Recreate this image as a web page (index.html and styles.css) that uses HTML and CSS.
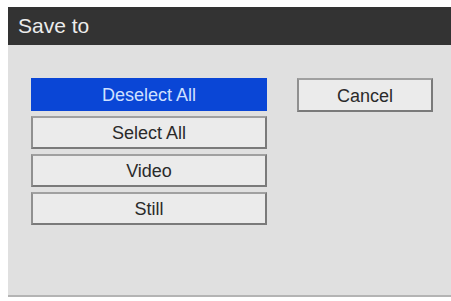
FILE: index.html
```html
<!DOCTYPE html>
<html>
  <head>
    <title>Save to</title>
    <link rel="stylesheet" href="styles.css">
  </head>
  <body>
    <div class="dialog">
      <div class="title">Save to</div>
      <div class="content">
        <div class="options">
          <button class="btn selected">Deselect All</button>
          <button class="btn">Select All</button>
          <button class="btn">Video</button>
          <button class="btn">Still</button>
        </div>
        <button class="btn cancel">Cancel</button>
      </div>
    </div>
  </body>
</html>
```

FILE: styles.css
```css
* {
  box-sizing: border-box;
}
body {
  margin: 0;
  background: #fff;
  font-family: 'Liberation Sans', Arial, sans-serif;
}
.dialog {
  margin: 7px 0 0 8px;
}
.title {
  height: 38px;
  background: #333333;
  color: #ececec;
  font-size: 21px;
  line-height: 37px;
  padding-left: 10px;
}
.content {
  display: flex;
  align-items: flex-start;
  gap: 30px;
  height: 252px;
  padding: 33px 0 0 23px;
  background: #e0e0e0;
  border-bottom: 2px solid #b4b4b4;
}
.options {
  display: flex;
  flex-direction: column;
  gap: 5px;
  width: 236px;
}
.btn {
  height: 33px;
  font-family: inherit;
  font-size: 18px;
  color: #2a2a2a;
  background: #ebebeb;
  border: 2px solid #7a7a7a;
  border-top-color: #a0a0a0;
  border-left-color: #909090;
  padding: 2px 0 0;
}
.btn.selected {
  background: #0a46d6;
  border-color: #0a46d6;
  color: #cfe0ff;
}
.btn.cancel {
  width: 136px;
  height: 34px;
}
```
